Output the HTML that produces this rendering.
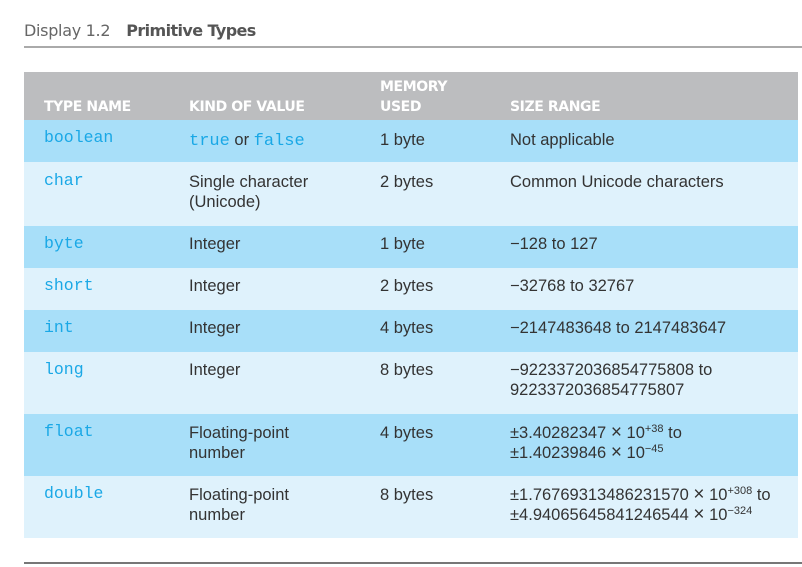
<!DOCTYPE html>
<html><head><style>
body{margin:0;width:802px;height:567px;background:#fff;position:relative;overflow:hidden;font-family:"Liberation Sans",sans-serif;color:#333}
.t{position:absolute;left:24px;top:21px;font-family:"DejaVu Sans",sans-serif;font-size:16px;color:#666;letter-spacing:-0.3px}
.t b{color:#555;font-weight:bold;margin-left:16px;letter-spacing:-0.6px}
.l1{position:absolute;left:24px;top:46px;width:778px;height:2px;background:#aaa}
.l2{position:absolute;left:24px;top:562px;width:778px;height:2px;background:#777}
.r{position:absolute;left:24px;width:774px}
.r div{position:absolute;font-size:16.5px;line-height:20px;white-space:nowrap}
.h{background:#bcbdbf;top:72px;height:48px}
.h div{color:#fff;font-family:"DejaVu Sans",sans-serif;font-weight:bold;font-size:14px;line-height:20px;letter-spacing:-0.4px}
.d{background:#a8dff9}.e{background:#dff2fc}
.c1{left:20px}.c2{left:165px}.c3{left:356px}.c4{left:486px}
.m{font-family:"Liberation Mono",monospace;color:#1aa8e6;font-size:17px}
sup{font-size:11px;vertical-align:6px;line-height:0}
.x{font-size:19px;line-height:0}
</style></head><body>
<div class="t">Display 1.2<b>Primitive Types</b></div>
<div class="l1"></div>
<div class="r h"><div class="c1" style="top:25px">TYPE NAME</div><div class="c2" style="top:25px">KIND OF VALUE</div><div class="c3" style="top:5px">MEMORY<br>USED</div><div class="c4" style="top:25px">SIZE RANGE</div></div>
<div class="r d" style="top:120px;height:42px"><div class="c1 m" style="top:8px">boolean</div><div class="c2" style="top:10px"><span class="m">true</span> or <span class="m">false</span></div><div class="c3" style="top:10px">1 byte</div><div class="c4" style="top:10px">Not applicable</div></div>
<div class="r e" style="top:162px;height:64px"><div class="c1 m" style="top:9px">char</div><div class="c2" style="top:10px">Single character<br>(Unicode)</div><div class="c3" style="top:10px">2 bytes</div><div class="c4" style="top:10px">Common Unicode characters</div></div>
<div class="r d" style="top:226px;height:42px"><div class="c1 m" style="top:8px">byte</div><div class="c2" style="top:8px">Integer</div><div class="c3" style="top:8px">1 byte</div><div class="c4" style="top:8px">&minus;128 to 127</div></div>
<div class="r e" style="top:268px;height:42px"><div class="c1 m" style="top:8px">short</div><div class="c2" style="top:8px">Integer</div><div class="c3" style="top:8px">2 bytes</div><div class="c4" style="top:8px">&minus;32768 to 32767</div></div>
<div class="r d" style="top:310px;height:42px"><div class="c1 m" style="top:8px">int</div><div class="c2" style="top:8px">Integer</div><div class="c3" style="top:8px">4 bytes</div><div class="c4" style="top:8px">&minus;2147483648 to 2147483647</div></div>
<div class="r e" style="top:352px;height:62px"><div class="c1 m" style="top:8px">long</div><div class="c2" style="top:8px">Integer</div><div class="c3" style="top:8px">8 bytes</div><div class="c4" style="top:8px">&minus;9223372036854775808 to<br>9223372036854775807</div></div>
<div class="r d" style="top:414px;height:62px"><div class="c1 m" style="top:8px">float</div><div class="c2" style="top:9px">Floating-point<br>number</div><div class="c3" style="top:9px">4 bytes</div><div class="c4" style="top:9px">&plusmn;3.40282347 <span class="x">&times;</span> 10<sup>+38</sup> to<br>&plusmn;1.40239846 <span class="x">&times;</span> 10<sup>&minus;45</sup></div></div>
<div class="r e" style="top:476px;height:62px"><div class="c1 m" style="top:8px">double</div><div class="c2" style="top:9px">Floating-point<br>number</div><div class="c3" style="top:9px">8 bytes</div><div class="c4" style="top:9px">&plusmn;1.76769313486231570 <span class="x">&times;</span> 10<sup>+308</sup> to<br>&plusmn;4.94065645841246544 <span class="x">&times;</span> 10<sup>&minus;324</sup></div></div>
<div class="l2"></div>
</body></html>
